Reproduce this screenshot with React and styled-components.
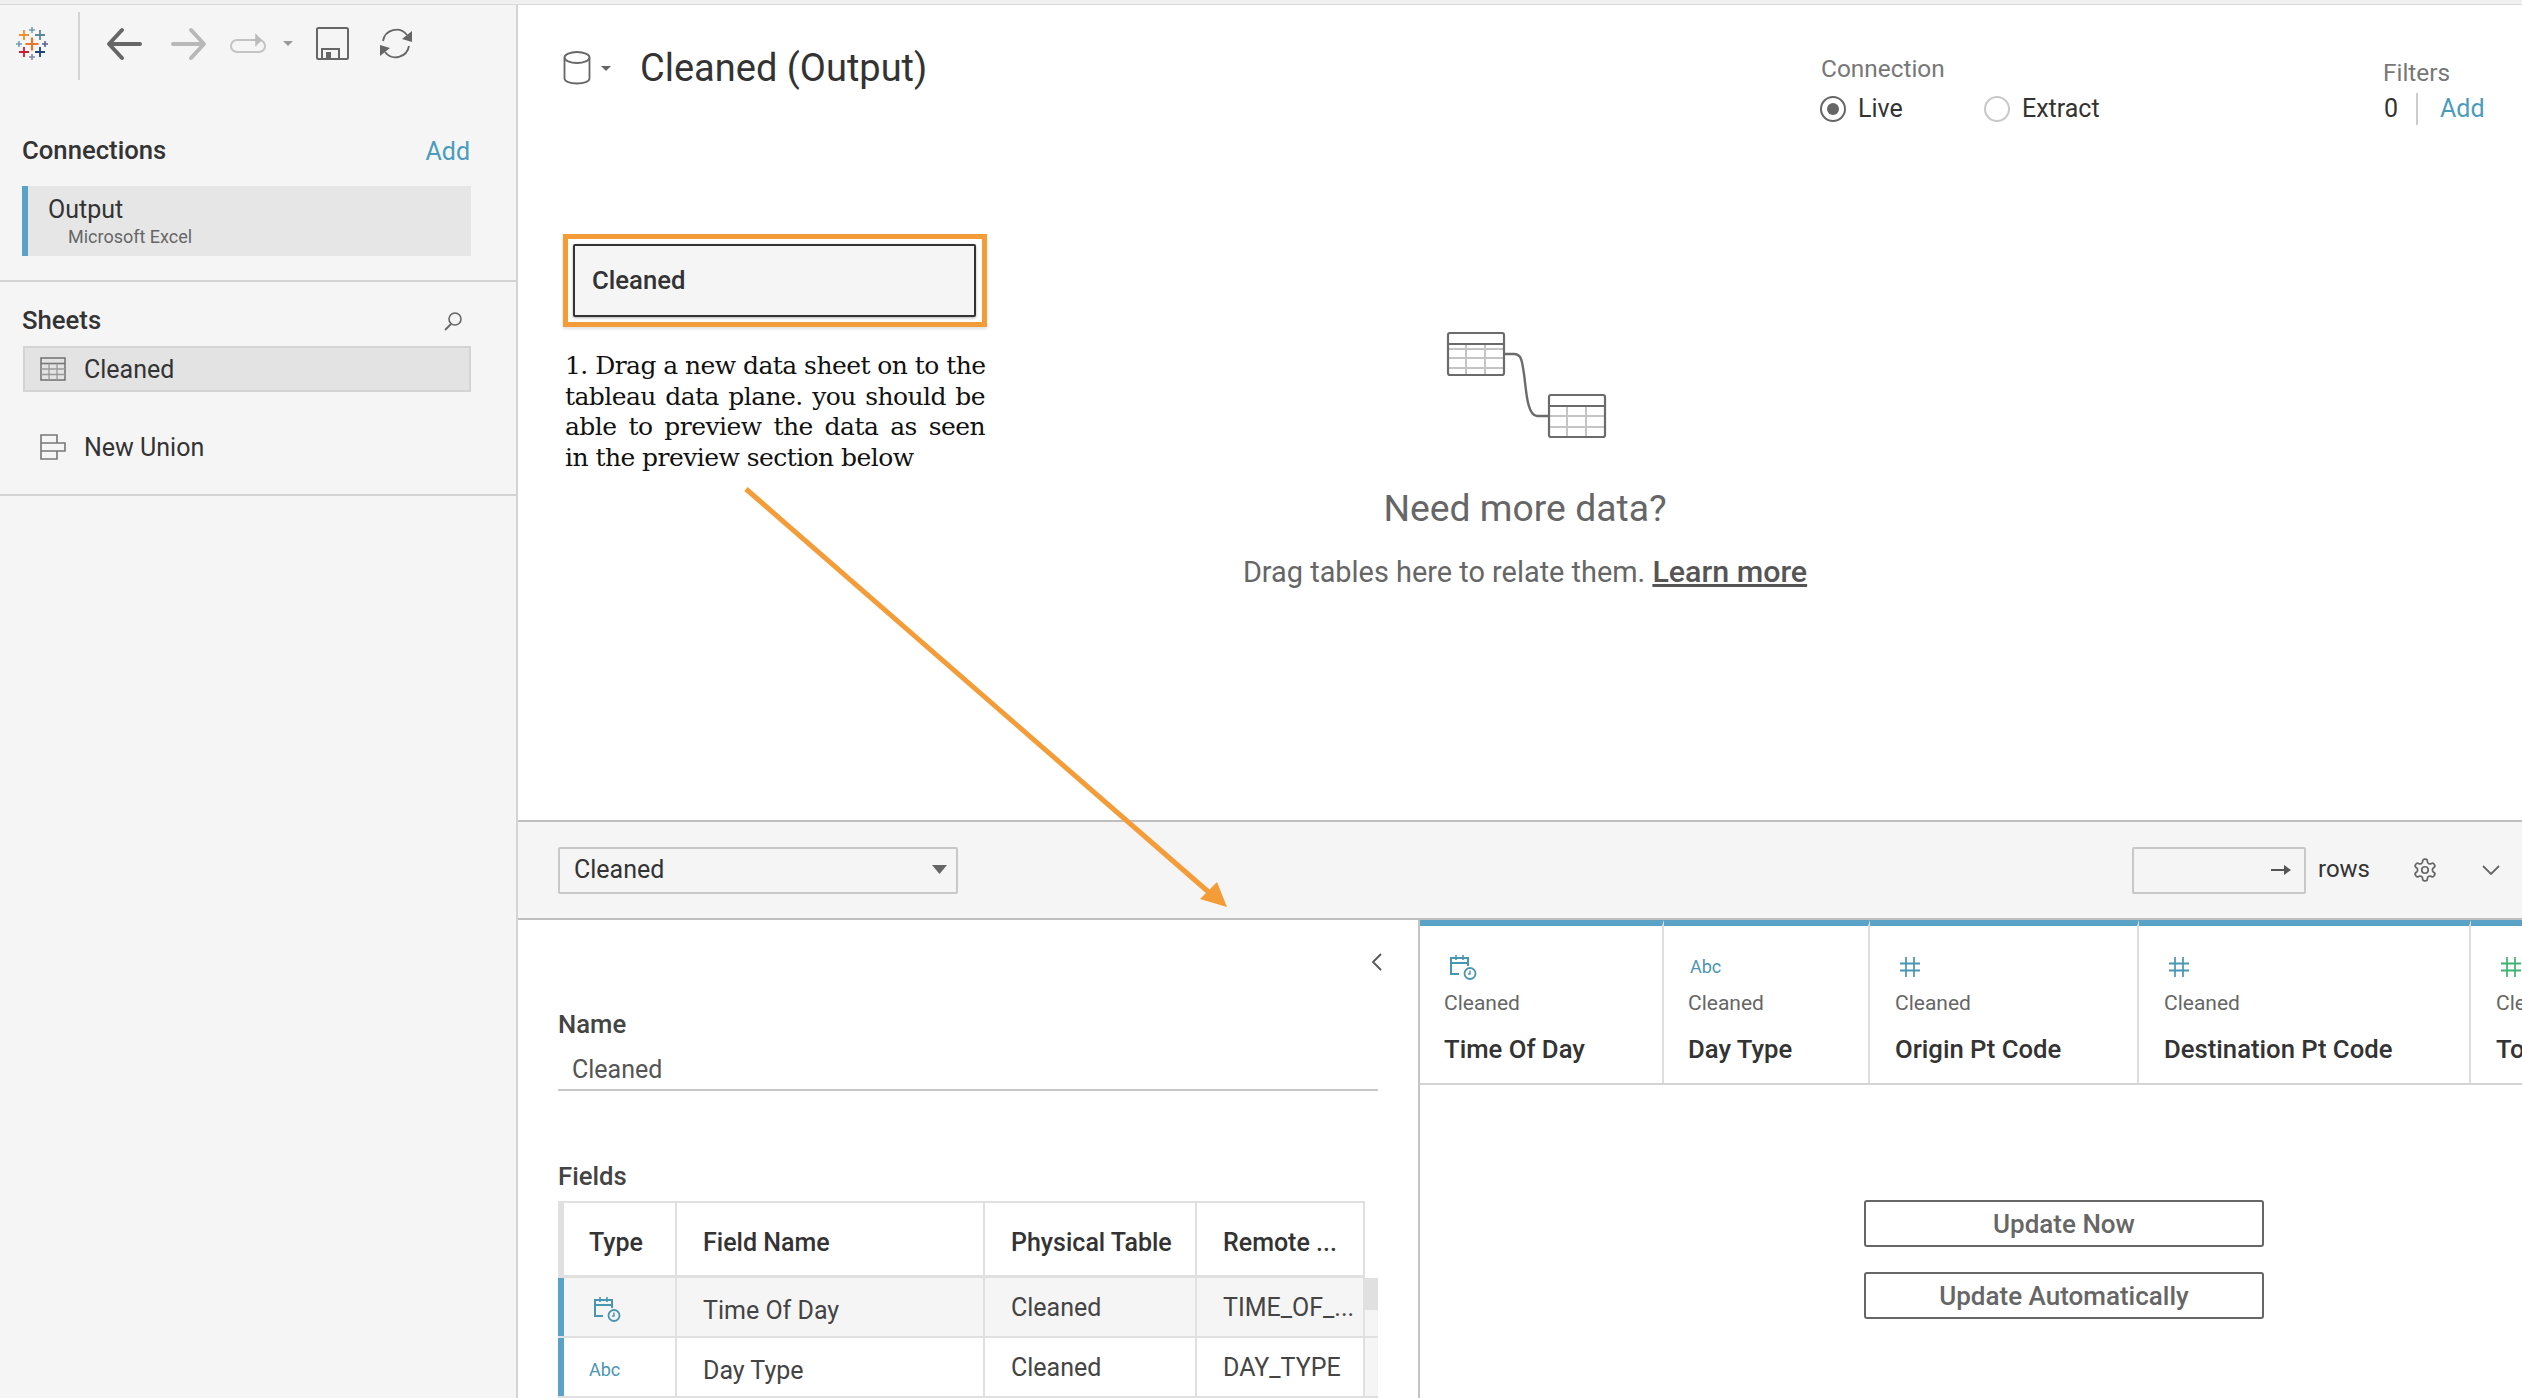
import React from 'react';
import styled, { createGlobalStyle } from 'styled-components';

const Global = createGlobalStyle`
  html, body { margin: 0; padding: 0; background: #fff; }
  body { font-family: Roboto, "Liberation Sans", sans-serif; color: #333; }
  * { box-sizing: border-box; }
`;

const BLUE = '#5ba3c6';
const ICON_BLUE = '#4996b2';
const ORANGE = '#f39c38';

const Page = styled.div`
  position: relative;
  width: 2522px;
  height: 1398px;
  overflow: hidden;
  display: flex;
  flex-direction: column;
`;
const TopStrip = styled.div`
  height: 5px;
  flex: none;
  background: #f0f0f0;
  border-bottom: 1px solid #d9d9d9;
`;
const Body = styled.div`
  flex: 1;
  display: flex;
  min-height: 0;
`;
const Sidebar = styled.aside`
  width: 518px;
  flex: none;
  background: #f5f5f5;
  border-right: 2px solid #d4d4d4;
`;
const Toolbar = styled.div`
  height: 75px;
  display: flex;
  align-items: center;
`;
const LogoSlot = styled.div`
  width: 78px;
  padding-left: 14px;
  margin-top: 3px;
  display: flex;
  align-items: center;
`;
const ToolDivider = styled.div`
  width: 2px;
  height: 68px;
  background: #d4d4d4;
  align-self: flex-start;
  margin-top: 7px;
`;
const ToolIcons = styled.div`
  display: flex;
  align-items: center;
  margin-left: 26px;
  margin-top: 2px;
`;
const ToolSvg = styled.svg`
  display: block;
  flex: none;
  margin-right: ${p => p.$mr || 0}px;
  margin-left: ${p => p.$ml || 0}px;
`;
const IconSlot = styled.span`
  display: block;
  flex: none;
  margin-left: ${p => p.$ml}px;
`;
const SectionHead = styled.div`
  display: flex;
  justify-content: space-between;
  align-items: center;
  padding: ${p => p.$pad || '0'};
`;
const SideTitle = styled.div`
  font-size: 25.7px;
  font-weight: 500;
  color: #333;
  line-height: 30px;
  position: relative;
  top: ${p => p.$nudge || 0}px;
`;
const LinkText = styled.span`
  font-size: 25px;
  color: #4a9cbd;
  line-height: 30px;
`;
const ConnAdd = styled(LinkText)`
  padding: 2px 0 0;
  margin-right: -1px;
`;
const ConnCard = styled.div`
  margin: 19px 45px 0 22px;
  height: 70px;
  background: #e6e6e6;
  border-left: 6px solid ${BLUE};
  padding: 9px 0 0 20px;
`;
const ConnName = styled.div`
  font-size: 25px;
  line-height: 30px;
  color: #333;
`;
const ConnSub = styled.div`
  font-size: 18px;
  line-height: 22px;
  margin-top: 1px;
  color: #666;
  padding-left: 20px;
`;
const SideDivider = styled.div`
  height: 2px;
  background: #d4d4d4;
  margin-top: ${p => p.$mt || 0}px;
`;
const SheetRow = styled.div`
  display: flex;
  align-items: center;
  gap: 18px;
  height: 46px;
  margin: 0 45px 0 23px;
  padding-left: 15px;
  font-size: 25px;
  color: #333;
  background: ${p => p.$active ? '#e3e3e3' : 'transparent'};
  border: 2px solid ${p => p.$active ? '#d4d4d4' : 'transparent'};
`;
const SheetList = styled.div`
  padding-top: 10px;
  padding-bottom: 24px;
  display: flex;
  flex-direction: column;
  gap: 32px;
`;

const Main = styled.main`
  flex: 1;
  min-width: 0;
  display: flex;
  flex-direction: column;
`;
const Canvas = styled.section`
  position: relative;
  height: 815px;
  flex: none;
  background: #fff;
`;
const Header = styled.header`
  display: flex;
  align-items: flex-start;
`;
const TitleGroup = styled.div`
  display: flex;
  align-items: center;
  margin-left: 45px;
  margin-top: 40px;
  width: 1258px;
`;
const Title = styled.h1`
  margin: 0 0 0 29px;
  font-size: 38px;
  font-weight: 400;
  line-height: 46px;
  color: #333;
`;
const MetaLabel = styled.div`
  font-size: 24.4px;
  line-height: 30px;
  color: #777;
`;
const ConnectionGroup = styled.div`
  width: 562px;
  padding-top: 49px;
`;
const RadioRow = styled.div`
  display: flex;
  align-items: center;
  margin-top: 10px;
  margin-left: -1px;
`;
const Radio = styled.span`
  width: 26px;
  height: 26px;
  border-radius: 50%;
  flex: none;
  border: 2px solid ${p => p.$on ? '#666' : '#c8c8c8'};
  display: flex;
  align-items: center;
  justify-content: center;
  background: #fff;
  &::after {
    content: '';
    width: 12px;
    height: 12px;
    border-radius: 50%;
    background: ${p => p.$on ? '#666' : 'transparent'};
  }
`;
const RadioLabel = styled.span`
  font-size: 25px;
  line-height: 30px;
  margin-left: 12px;
  width: ${p => p.$w}px;
  color: #333;
`;
const FiltersGroup = styled.div`
  padding-top: 53px;
`;
const FilterRow = styled.div`
  display: flex;
  align-items: center;
  margin-top: 5px;
  margin-left: 1px;
  font-size: 25px;
  line-height: 32px;
`;
const FilterCount = styled.span`
  padding-right: 18px;
  border-right: 2px solid #ccc;
  color: #333;
`;
const FilterAdd = styled(LinkText)`
  margin-left: 22px;
`;
const NodeHighlight = styled.div`
  position: absolute;
  left: 45px;
  top: 229px;
  width: 424px;
  height: 93px;
  border: 5px solid ${ORANGE};
  padding: 5px;
  box-shadow: 0 2px 3px rgba(0,0,0,.12);
`;
const NodeBox = styled.div`
  height: 73px;
  width: 403px;
  border: 2px solid #333;
  border-radius: 2px;
  background: #f5f5f5;
  display: flex;
  align-items: center;
  padding: 0 0 2px 17px;
  font-size: 25.7px;
  font-weight: 500;
  color: #333;
  box-shadow: 0 1px 3px rgba(0,0,0,.3);
`;
const Note = styled.div`
  position: absolute;
  left: 47px;
  top: 346px;
  width: 420px;
  font-family: "DejaVu Serif", "Liberation Serif", serif;
  font-size: 25px;
  line-height: 30.7px;
  color: #111;
`;
const NoteLine = styled.span`
  display: block;
  white-space: nowrap;
  text-align: justify;
  text-align-last: ${p => p.$last ? 'left' : 'justify'};
  letter-spacing: -0.55px;
`;
const Hint = styled.div`
  display: flex;
  flex-direction: column;
  align-items: center;
  margin-left: 725px;
  width: 564px;
  margin-top: 206px;
`;
const HintTitle = styled.div`
  margin-top: 45px;
  font-size: 37.3px;
  line-height: 44px;
  color: #666;
`;
const HintText = styled.div`
  margin-top: 24px;
  font-size: 28.9px;
  line-height: 36px;
  color: #666;
  white-space: nowrap;
  a {
    color: #555;
    font-size: 30.4px;
    font-weight: 500;
    text-decoration: underline;
  }
`;
const RowBar = styled.div`
  height: 100px;
  flex: none;
  background: #f5f5f5;
  border-top: 2px solid #bfbfbf;
  border-bottom: 2px solid #bfbfbf;
  display: flex;
  align-items: center;
  padding-left: 40px;
`;
const Select = styled.div`
  width: 400px;
  height: 47px;
  border: 2px solid #c8c8c8;
  border-radius: 2px;
  display: flex;
  align-items: center;
  justify-content: space-between;
  padding: 0 9px 2px 14px;
  font-size: 25px;
  color: #333;
`;
const RowsInput = styled.div`
  width: 174px;
  height: 47px;
  margin-left: 1174px;
  border: 2px solid #c8c8c8;
  border-radius: 2px;
  display: flex;
  align-items: center;
  justify-content: flex-end;
  padding-right: 13px;
`;
const RowsLabel = styled.span`
  font-size: 24px;
  color: #333;
  margin-left: 12px;
  padding-bottom: 2px;
`;
const Lower = styled.div`
  flex: 1;
  min-height: 0;
  display: flex;
`;
const Details = styled.div`
  width: 902px;
  flex: none;
  background: #fff;
  border-right: 2px solid #c4c4c4;
  padding: 0 0 0 40px;
  display: flex;
  flex-direction: column;
  overflow: hidden;
`;
const CollapseRow = styled.div`
  display: flex;
  justify-content: flex-end;
  padding: 33px 36px 0 0;
`;
const FieldLabel = styled.div`
  font-size: 25.7px;
  font-weight: 500;
  line-height: 30px;
  color: #444;
  margin-top: ${p => p.$mt}px;
`;
const NameValue = styled.div`
  margin-top: 18px;
  width: 820px;
  height: 39px;
  padding-left: 14px;
  font-size: 25px;
  line-height: 26px;
  color: #555;
  border-bottom: 2px solid #c8c8c8;
`;
const FieldsWrap = styled.div`
  margin-top: 10px;
  display: flex;
  width: 820px;
  flex-direction: column;
`;
const FieldRow = styled.div`
  display: grid;
  grid-template-columns: 119px 308px 212px 168px;
  width: ${p => p.$w || 820}px;
  height: ${p => p.$h}px;
  border-top: ${p => p.$bt || 0}px solid #e0e0e0;
  border-bottom: ${p => p.$bb}px solid #e0e0e0;
  background: linear-gradient(to right, ${p => p.$bg} 807px, #f5f5f5 807px);
`;
const Cell = styled.div`
  display: flex;
  align-items: center;
  padding-left: ${p => p.$pl || 26}px;
  padding-top: ${p => p.$pt || 0}px;
  font-size: 25px;
  font-weight: ${p => p.$head ? 500 : 400};
  color: ${p => p.$head ? '#333' : '#444'};
  border-right: 2px solid #e0e0e0;
  white-space: nowrap;
  overflow: hidden;
`;
const TypeCell = styled(Cell)`
  border-left: 6px solid ${p => p.$bar};
  padding-left: ${p => p.$pl}px;
`;
const AbcMark = styled.span`
  color: ${ICON_BLUE};
  font-size: ${p => p.$size || 18}px;
  line-height: 24px;
`;
const Thumb = styled.div`
  position: absolute;
  left: 807px;
  top: 0;
  width: 13px;
  height: 32px;
  background: #e0e0e0;
`;
const RowsArea = styled.div`
  position: relative;
`;
const Preview = styled.div`
  flex: 1;
  min-width: 0;
  background: #fff;
  overflow: hidden;
`;
const Columns = styled.div`
  display: flex;
  height: 165px;
  border-bottom: 2px solid #d4d4d4;
`;
const Column = styled.div`
  width: ${p => p.$w}px;
  flex: none;
  border-top: 6px solid ${BLUE};
  border-right: 2px solid #dedede;
  padding: 27px 0 0 ${p => p.$pl}px;
  white-space: nowrap;
`;
const ColIcon = styled.div`
  height: 28px;
  display: flex;
  align-items: center;
  padding-left: ${p => p.$pl || 0}px;
`;
const ColSource = styled.div`
  margin-top: 9px;
  font-size: 21px;
  line-height: 26px;
  color: #666;
`;
const ColName = styled.div`
  margin-top: 17px;
  font-size: 25.7px;
  font-weight: 500;
  line-height: 32px;
  color: #333;
`;
const Buttons = styled.div`
  display: flex;
  flex-direction: column;
  gap: 25px;
  align-items: flex-start;
  padding: 115px 0 0 444px;
`;
const UpdateButton = styled.div`
  width: 400px;
  height: 47px;
  border: 2px solid #666;
  border-radius: 3px;
  display: flex;
  align-items: center;
  justify-content: center;
  font-size: 26px;
  font-weight: 500;
  color: #666;
`;
const ArrowOverlay = styled.svg`
  position: absolute;
  left: 0;
  top: 0;
  pointer-events: none;
`;

const Plus = ({ x, y, s, w, c }) => (
  <path d={`M${x - s} ${y}H${x + s}M${x} ${y - s}V${y + s}`} stroke={c} strokeWidth={w} fill="none" />
);
const Logo = () => (
  <ToolSvg width="36" height="36" viewBox="0 0 36 36">
    <Plus x={18} y={18} s={6.5} w={2.2} c="#e8762d" />
    <Plus x={10} y={9} s={5} w={1.8} c="#f28e2b" />
    <Plus x={26} y={9} s={5} w={1.8} c="#59879b" />
    <Plus x={10} y={26} s={5} w={1.8} c="#c72037" />
    <Plus x={26} y={26} s={5} w={1.8} c="#1f447a" />
    <Plus x={18} y={4} s={3} w={1.6} c="#6f9db1" />
    <Plus x={5} y={18} s={3} w={1.6} c="#6f9db1" />
    <Plus x={31} y={18} s={3} w={1.6} c="#5b5f97" />
    <Plus x={18} y={31} s={3} w={1.6} c="#8584a8" />
  </ToolSvg>
);
const FlipSvg = styled(ToolSvg)`
  transform: ${p => p.$flip ? 'scaleX(-1)' : 'none'};
`;
const BackIcon = ({ flip, c, mr }) => (
  <FlipSvg $mr={mr} $flip={flip} width="36" height="34" viewBox="0 0 36 34">
    <path d="M34 17H4M16 3 3 17l13 14" fill="none" stroke={c} strokeWidth="4" strokeLinecap="round" strokeLinejoin="round" />
  </FlipSvg>
);
const RunIcon = () => (
  <ToolSvg $mr={17} width="36" height="24" viewBox="0 0 36 24">
    <path d="M27 8H7a5.5 5.5 0 0 0 0 12h22a5.5 5.5 0 0 0 0-12" fill="none" stroke="#c4c4c4" strokeWidth="2" />
    <path d="M21 8H30M26 3l5 5-5 5z" fill="#bbb" stroke="#bbb" strokeWidth="1.5" />
  </ToolSvg>
);
const Caret = ({ w = 10, h = 5, mr = 0, ml = 0, c = '#999' }) => (
  <ToolSvg $mr={mr} $ml={ml} width={w} height={h} viewBox="0 0 10 5" preserveAspectRatio="none">
    <path d="M0 0h10L5 5z" fill={c} />
  </ToolSvg>
);
const SaveIcon = () => (
  <ToolSvg $mr={30} width="33" height="33" viewBox="0 0 33 33">
    <rect x="1" y="1" width="31" height="31" rx="1.5" fill="none" stroke="#666" strokeWidth="2" />
    <path d="M6 32V22h17v10" fill="none" stroke="#666" strokeWidth="2" />
    <rect x="10" y="25" width="5" height="7" fill="#666" />
  </ToolSvg>
);
const RefreshIcon = () => (
  <ToolSvg width="34" height="33" viewBox="0 0 34 33">
    <path d="M4 14A13.5 13.5 0 0 1 28 8" fill="none" stroke="#666" strokeWidth="1.8" />
    <path d="M30 19A13.5 13.5 0 0 1 6 25" fill="none" stroke="#666" strokeWidth="1.8" />
    <path d="M33 4v11l-10-3z" fill="#666" />
    <path d="M1 29V18l10 3z" fill="#666" />
  </ToolSvg>
);
const SearchIcon = () => (
  <ToolSvg width="20" height="20" viewBox="0 0 20 20">
    <circle cx="12" cy="8" r="6" fill="none" stroke="#666" strokeWidth="1.6" />
    <path d="M8 13 2 19" stroke="#666" strokeWidth="1.8" />
  </ToolSvg>
);
const GridIcon = () => (
  <ToolSvg width="26" height="24" viewBox="0 0 26 24">
    <rect x="1" y="1" width="24" height="22" fill="none" stroke="#777" strokeWidth="1.6" />
    <path d="M1 6.5h24" stroke="#777" strokeWidth="1.6" />
    <path d="M1 12h24M1 17.5h24M9 6.5V23M17 6.5V23" stroke="#999" strokeWidth="1.3" />
  </ToolSvg>
);
const UnionIcon = () => (
  <ToolSvg width="26" height="26" viewBox="0 0 26 26">
    <path d="M1 1h16v8H1zM1 9h24v8H1zM1 17h16v8H1z" fill="none" stroke="#777" strokeWidth="1.6" />
  </ToolSvg>
);
const DbIcon = () => (
  <ToolSvg width="28" height="34" viewBox="0 0 28 34">
    <ellipse cx="14" cy="6.5" rx="12.5" ry="5.5" fill="none" stroke="#666" strokeWidth="1.8" />
    <path d="M1.5 6.5v21c0 3 5.5 5 12.5 5s12.5-2 12.5-5v-21" fill="none" stroke="#666" strokeWidth="1.8" />
  </ToolSvg>
);
const DiagramIcon = () => (
  <ToolSvg $ml={3} width="162" height="110" viewBox="0 0 162 110">
    <g transform="translate(1,1)">
      <path d="M1 17h55M1 26h55M1 36h55M19 12v30M38 12v30" stroke="#c4c4c4" strokeWidth="2" fill="none" />
      <rect x="1" y="1" width="56" height="42" rx="2" fill="none" stroke="#6b6b6b" strokeWidth="2.2" />
      <path d="M1 12h56" stroke="#6b6b6b" strokeWidth="2.2" />
    </g>
    <g transform="translate(102,63)">
      <path d="M1 22h55M1 33h55M19 12v30M38 12v30" stroke="#c4c4c4" strokeWidth="2" fill="none" />
      <rect x="1" y="1" width="56" height="42" rx="2" fill="none" stroke="#6b6b6b" strokeWidth="2.2" />
      <path d="M1 12h56" stroke="#6b6b6b" strokeWidth="2.2" />
    </g>
    <path d="M58 23h10c8 0 8 8 10 20 2 14 3 42 13 42h12" fill="none" stroke="#6b6b6b" strokeWidth="2.4" />
  </ToolSvg>
);
const CalendarClock = ({ c = ICON_BLUE }) => (
  <ToolSvg width="28" height="26" viewBox="0 0 28 26">
    <path d="M10 20H2V4h17v8M2 9h17" fill="none" stroke={c} strokeWidth="2" />
    <path d="M7 1v5M14 1v5" fill="none" stroke={c} strokeWidth="1.6" />
    <circle cx="21" cy="19.5" r="5.5" fill="none" stroke={c} strokeWidth="1.8" />
    <path d="M21 16.5v3.5h-2" fill="none" stroke={c} strokeWidth="1.4" />
  </ToolSvg>
);
const HashIcon = ({ c = ICON_BLUE }) => (
  <ToolSvg width="20" height="20" viewBox="0 0 20 20">
    <path d="M6 0v20M14 0v20" stroke={c} strokeWidth="1.7" />
    <path d="M0 6.5h20M0 13.5h20" stroke={c} strokeWidth="2" />
  </ToolSvg>
);
const ChevronLeft = () => (
  <ToolSvg width="11" height="18" viewBox="0 0 11 18">
    <path d="M10 1 2 9l8 8" fill="none" stroke="#555" strokeWidth="1.8" />
  </ToolSvg>
);
const RowsArrow = () => (
  <ToolSvg width="20" height="12" viewBox="0 0 20 12">
    <path d="M0 6h14" stroke="#555" strokeWidth="2" />
    <path d="M13 1l7 5-7 5z" fill="#555" />
  </ToolSvg>
);
const GearIcon = () => (
  <ToolSvg width="26" height="26" viewBox="0 0 24 24">
    <path d="M12.22 2h-.44a2 2 0 0 0-2 2v.18a2 2 0 0 1-1 1.73l-.43.25a2 2 0 0 1-2 0l-.15-.08a2 2 0 0 0-2.73.73l-.22.38a2 2 0 0 0 .73 2.73l.15.1a2 2 0 0 1 1 1.72v.51a2 2 0 0 1-1 1.74l-.15.09a2 2 0 0 0-.73 2.73l.22.38a2 2 0 0 0 2.73.73l.15-.08a2 2 0 0 1 2 0l.43.25a2 2 0 0 1 1 1.73V20a2 2 0 0 0 2 2h.44a2 2 0 0 0 2-2v-.18a2 2 0 0 1 1-1.73l.43-.25a2 2 0 0 1 2 0l.15.08a2 2 0 0 0 2.73-.73l.22-.39a2 2 0 0 0-.73-2.73l-.15-.08a2 2 0 0 1-1-1.74v-.5a2 2 0 0 1 1-1.74l.15-.09a2 2 0 0 0 .73-2.73l-.22-.38a2 2 0 0 0-2.73-.73l-.15.08a2 2 0 0 1-2 0l-.43-.25a2 2 0 0 1-1-1.73V4a2 2 0 0 0-2-2z" fill="none" stroke="#666" strokeWidth="1.6" />
    <circle cx="12" cy="12" r="3" fill="none" stroke="#666" strokeWidth="1.6" />
  </ToolSvg>
);
const ChevronDown = () => (
  <ToolSvg width="18" height="10" viewBox="0 0 18 10">
    <path d="M1 1l8 8 8-8" fill="none" stroke="#666" strokeWidth="1.8" />
  </ToolSvg>
);
const Arrow = () => (
  <ArrowOverlay width="2522" height="1398" viewBox="0 0 2522 1398">
    <path d="M746 489 1212 895" stroke={ORANGE} strokeWidth="5" fill="none" />
    <path d="M1227 907 1200 899 1217 882z" fill={ORANGE} />
  </ArrowOverlay>
);

const columns = [
  { w: 244, pl: 24, icon: <ColIcon $pl={5}><CalendarClock /></ColIcon>, name: 'Time Of Day' },
  { w: 206, pl: 24, icon: <ColIcon $pl={2}><AbcMark>Abc</AbcMark></ColIcon>, name: 'Day Type' },
  { w: 269, pl: 25, icon: <ColIcon $pl={5}><HashIcon /></ColIcon>, name: 'Origin Pt Code' },
  { w: 332, pl: 25, icon: <ColIcon $pl={5}><HashIcon /></ColIcon>, name: 'Destination Pt Code' },
  { w: 120, pl: 25, icon: <ColIcon $pl={5}><HashIcon c="#3cb371" /></ColIcon>, name: 'Total Trips' },
];

export default function App() {
  return (
    <Page>
      <Global />
      <TopStrip />
      <Body>
        <Sidebar>
          <Toolbar>
            <LogoSlot><Logo /></LogoSlot>
            <ToolDivider />
            <ToolIcons>
              <BackIcon c="#666" mr={29} />
              <BackIcon flip c="#b8b8b8" mr={23} />
              <RunIcon />
              <Caret mr={23} />
              <SaveIcon />
              <RefreshIcon />
            </ToolIcons>
          </Toolbar>
          <SectionHead $pad="55px 47px 0 22px">
            <SideTitle $nudge={-1}>Connections</SideTitle>
            <ConnAdd>Add</ConnAdd>
          </SectionHead>
          <ConnCard>
            <ConnName>Output</ConnName>
            <ConnSub>Microsoft Excel</ConnSub>
          </ConnCard>
          <SideDivider $mt={24} />
          <SectionHead $pad="24px 53px 0 22px">
            <SideTitle $nudge={-1}>Sheets</SideTitle>
            <SearchIcon />
          </SectionHead>
          <SheetList>
            <SheetRow $active><GridIcon />Cleaned</SheetRow>
            <SheetRow><UnionIcon />New Union</SheetRow>
          </SheetList>
          <SideDivider />
        </Sidebar>
        <Main>
          <Canvas>
            <Header>
              <TitleGroup>
                <DbIcon />
                <Caret ml={10} c="#666" />
                <Title>Cleaned (Output)</Title>
              </TitleGroup>
              <ConnectionGroup>
                <MetaLabel>Connection</MetaLabel>
                <RadioRow>
                  <Radio $on />
                  <RadioLabel $w={126}>Live</RadioLabel>
                  <Radio />
                  <RadioLabel $w={120}>Extract</RadioLabel>
                </RadioRow>
              </ConnectionGroup>
              <FiltersGroup>
                <MetaLabel>Filters</MetaLabel>
                <FilterRow>
                  <FilterCount>0</FilterCount>
                  <FilterAdd>Add</FilterAdd>
                </FilterRow>
              </FiltersGroup>
            </Header>
            <NodeHighlight><NodeBox>Cleaned</NodeBox></NodeHighlight>
            <Note>
              <NoteLine>1. Drag a new data sheet on to the</NoteLine>
              <NoteLine>tableau data plane. you should be</NoteLine>
              <NoteLine>able to preview the data as seen</NoteLine>
              <NoteLine $last>in the preview section below</NoteLine>
            </Note>
            <Hint>
              <DiagramIcon />
              <HintTitle>Need more data?</HintTitle>
              <HintText>Drag tables here to relate them. <a>Learn more</a></HintText>
            </Hint>
          </Canvas>
          <RowBar>
            <Select>Cleaned<Caret w={15} h={9} c="#666" /></Select>
            <RowsInput><RowsArrow /></RowsInput>
            <RowsLabel>rows</RowsLabel>
            <IconSlot $ml={42}><GearIcon /></IconSlot>
            <IconSlot $ml={44}><ChevronDown /></IconSlot>
          </RowBar>
          <Lower>
            <Details>
              <CollapseRow><ChevronLeft /></CollapseRow>
              <FieldLabel $mt={38}>Name</FieldLabel>
              <NameValue>Cleaned</NameValue>
              <FieldLabel $mt={70}>Fields</FieldLabel>
              <FieldsWrap>
                <FieldRow $w={807} $h={77} $bt={2} $bb={3} $bg="#fff">
                  <TypeCell $bar="#e0e0e0" $pl={25} $pt={6} $head>Type</TypeCell>
                  <Cell $head $pt={6}>Field Name</Cell>
                  <Cell $head $pt={6}>Physical Table</Cell>
                  <Cell $head $pt={6}>Remote ...</Cell>
                </FieldRow>
                <RowsArea>
                  <FieldRow $h={60} $bb={2} $bg="#f5f5f5">
                    <TypeCell $bar={BLUE} $pl={29} $pt={4}><CalendarClock /></TypeCell>
                    <Cell $pt={6}>Time Of Day</Cell>
                    <Cell>Cleaned</Cell>
                    <Cell>TIME_OF_...</Cell>
                  </FieldRow>
                  <FieldRow $h={60} $bb={2} $bg="#fff">
                    <TypeCell $bar={BLUE} $pl={25} $pt={6}><AbcMark>Abc</AbcMark></TypeCell>
                    <Cell $pt={6}>Day Type</Cell>
                    <Cell>Cleaned</Cell>
                    <Cell>DAY_TYPE</Cell>
                  </FieldRow>
                  <Thumb />
                </RowsArea>
              </FieldsWrap>
            </Details>
            <Preview>
              <Columns>
                {columns.map(c => (
                  <Column key={c.name} $w={c.w} $pl={c.pl}>
                    {c.icon}
                    <ColSource>Cleaned</ColSource>
                    <ColName>{c.name}</ColName>
                  </Column>
                ))}
              </Columns>
              <Buttons>
                <UpdateButton>Update Now</UpdateButton>
                <UpdateButton>Update Automatically</UpdateButton>
              </Buttons>
            </Preview>
          </Lower>
        </Main>
      </Body>
      <Arrow />
    </Page>
  );
}
